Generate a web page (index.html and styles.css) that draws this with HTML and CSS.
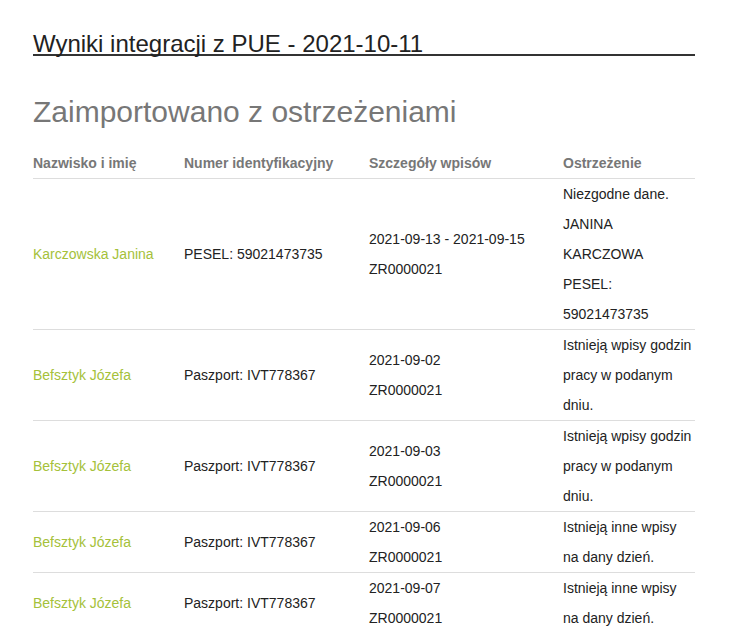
FILE: index.html
```html
<!DOCTYPE html>
<html lang="pl">
<head>
<meta charset="utf-8">
<title>Wyniki integracji z PUE</title>
<link rel="stylesheet" href="styles.css">
</head>
<body>
<div class="page">
  <h1 class="title">Wyniki integracji z PUE - 2021-10-11</h1>
  <h2 class="section">Zaimportowano z ostrzeżeniami</h2>
  <table class="results">
    <colgroup>
      <col class="c-name">
      <col class="c-id">
      <col class="c-details">
      <col class="c-warn">
    </colgroup>
    <thead>
      <tr>
        <th>Nazwisko i imię</th>
        <th>Numer identyfikacyjny</th>
        <th>Szczegóły wpisów</th>
        <th>Ostrzeżenie</th>
      </tr>
    </thead>
    <tbody>
      <tr>
        <td class="name">Karczowska Janina</td>
        <td>PESEL: 59021473735</td>
        <td>2021-09-13 - 2021-09-15<br>ZR0000021</td>
        <td>Niezgodne dane. JANINA KARCZOWA PESEL: 59021473735</td>
      </tr>
      <tr>
        <td class="name">Befsztyk Józefa</td>
        <td>Paszport: IVT778367</td>
        <td>2021-09-02<br>ZR0000021</td>
        <td>Istnieją wpisy godzin pracy w podanym dniu.</td>
      </tr>
      <tr>
        <td class="name">Befsztyk Józefa</td>
        <td>Paszport: IVT778367</td>
        <td>2021-09-03<br>ZR0000021</td>
        <td>Istnieją wpisy godzin pracy w podanym dniu.</td>
      </tr>
      <tr>
        <td class="name">Befsztyk Józefa</td>
        <td>Paszport: IVT778367</td>
        <td>2021-09-06<br>ZR0000021</td>
        <td>Istnieją inne wpisy na dany dzień.</td>
      </tr>
      <tr>
        <td class="name">Befsztyk Józefa</td>
        <td>Paszport: IVT778367</td>
        <td>2021-09-07<br>ZR0000021</td>
        <td>Istnieją inne wpisy na dany dzień.</td>
      </tr>
    </tbody>
  </table>
</div>
</body>
</html>
```

FILE: styles.css
```css
html, body {
  margin: 0;
  padding: 0;
  background: #fff;
}

body {
  font-family: "Liberation Sans", Arial, sans-serif;
  font-size: 14px;
  color: #333;
}

.page {
  width: 662px;
  padding: 34px 0 0 33px;
}

.title {
  margin: 0;
  font-size: 24px;
  font-weight: normal;
  line-height: 20px;
  color: #222;
  border-bottom: 2px solid #333;
}

.section {
  margin: 39px 0 0 0;
  font-size: 30px;
  font-weight: normal;
  line-height: 33px;
  color: #777;
}

.results {
  margin-top: 20px;
  width: 662px;
  table-layout: fixed;
  border-collapse: collapse;
}

.c-name { width: 151px; }
.c-id { width: 185px; }
.c-details { width: 194px; }
.c-warn { width: 132px; }

.results th {
  padding: 0;
  text-align: left;
  font-weight: bold;
  line-height: 30px;
  color: #777;
  border-bottom: 1px solid #ddd;
}

.results td {
  padding: 0;
  line-height: 30px;
  vertical-align: middle;
  border-top: 1px solid #ddd;
  color: #222;
}

.results td.name {
  color: #a5c13a;
}
```
